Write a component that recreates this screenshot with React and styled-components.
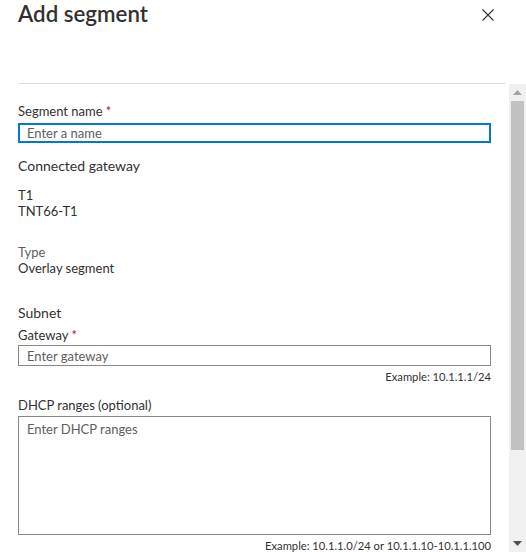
import React from "react";
import styled, { createGlobalStyle } from "styled-components";

const GlobalStyle = createGlobalStyle`
  html, body {
    margin: 0;
    padding: 0;
    background: #fff;
  }
  body {
    font-family: Lato, "Open Sans", sans-serif;
    color: #323130;
  }
`;

const Panel = styled.div`
  width: 526px;
  height: 552px;
  display: flex;
  flex-direction: column;
  overflow: hidden;
  background: #fff;
`;

const Header = styled.div`
  height: 83px;
  margin: 0 21px 0 18px;
  border-bottom: 1px solid #e1dfdd;
  display: flex;
  justify-content: space-between;
  align-items: flex-start;
`;

const Title = styled.h2`
  margin: 0;
  font-size: 22.3px;
  font-weight: 600;
  line-height: 28px;
  color: #323130;
`;

const CloseButton = styled.button`
  border: none;
  background: transparent;
  padding: 0;
  margin: 9px 11px 0 0;
  width: 12px;
  height: 12px;
  display: flex;
  cursor: pointer;
`;

const Body = styled.div`
  flex: 1;
  display: flex;
  min-height: 0;
`;

const Content = styled.div`
  flex: 1;
  padding: 19px 18px 0 18px;
  display: flex;
  flex-direction: column;
  font-size: 13px;
  line-height: 16px;
`;

const Label = styled.div`
  font-size: 13px;
  line-height: 16px;
  color: ${(p) => (p.$muted ? "#605e5c" : "#323130")};
  margin-bottom: ${(p) => p.$gap || 0}px;
`;

const Required = styled.span`
  color: #a4262c;
  margin-left: 3px;
`;

const SectionTitle = styled.div`
  font-size: 14px;
  line-height: 18px;
  color: #323130;
  margin-top: ${(p) => p.$top || 0}px;
`;

const Text = styled.div`
  font-size: 13px;
  line-height: 16px;
  color: #323130;
`;

const Group = styled.div`
  display: flex;
  flex-direction: column;
  margin-top: ${(p) => p.$top || 0}px;
`;

const TextInput = styled.input`
  box-sizing: border-box;
  width: 100%;
  height: 21px;
  margin: 0;
  padding: 0 8px;
  font-family: inherit;
  font-size: 13px;
  color: #323130;
  background: #fff;
  border: ${(p) => (p.$focused ? "2px solid #0078d4" : "1px solid #8a8886")};
  padding-left: ${(p) => (p.$focused ? 7 : 8)}px;
  outline: none;
  border-radius: 0;

  &::placeholder {
    color: #605e5c;
  }
`;

const TextArea = styled.textarea`
  box-sizing: border-box;
  width: 100%;
  height: 119px;
  margin: 0;
  padding: 4px 8px;
  font-family: inherit;
  font-size: 13px;
  line-height: 16px;
  color: #323130;
  border: 1px solid #8a8886;
  border-radius: 0;
  resize: none;
  outline: none;
  display: block;

  &::placeholder {
    color: #605e5c;
  }
`;

const Hint = styled.div`
  text-align: right;
  font-size: 11.2px;
  line-height: 14px;
  color: #323130;
  margin-top: 4px;
`;

const ScrollTrack = styled.div`
  width: 17px;
  background: #f0f0f0;
  display: flex;
  flex-direction: column;
  align-items: center;
`;

const ScrollArrow = styled.div`
  height: 17px;
  width: 17px;
  display: flex;
  align-items: center;
  justify-content: center;
`;

const ScrollThumb = styled.div`
  width: 13px;
  height: 349px;
  background: #c1c1c1;
`;

const Spacer = styled.div`
  flex: 1;
`;

const Arrow = ({ down }) => (
  <svg width="9" height="5" viewBox="0 0 9 5">
    <path
      d={down ? "M0 0 L9 0 L4.5 5 Z" : "M0 5 L9 5 L4.5 0 Z"}
      fill={down ? "#505050" : "#a3a3a3"}
    />
  </svg>
);

export default function App() {
  return (
    <>
      <GlobalStyle />
      <Panel>
        <Header>
          <Title>Add segment</Title>
          <CloseButton aria-label="Close">
            <svg width="12" height="12" viewBox="0 0 12 12">
              <path d="M0.5 0.5 L11.5 11.5 M11.5 0.5 L0.5 11.5" stroke="#323130" strokeWidth="1.1" />
            </svg>
          </CloseButton>
        </Header>
        <Body>
          <Content>
            <Label $gap={4}>
              Segment name<Required>*</Required>
            </Label>
            <TextInput $focused placeholder="Enter a name" />

            <SectionTitle $top={14}>Connected gateway</SectionTitle>
            <Group $top={12}>
              <Text>T1</Text>
              <Text>TNT66-T1</Text>
            </Group>

            <Group $top={25}>
              <Label $muted>Type</Label>
              <Text>Overlay segment</Text>
            </Group>

            <SectionTitle $top={28}>Subnet</SectionTitle>
            <Group $top={5}>
              <Label $gap={2}>
                Gateway<Required>*</Required>
              </Label>
              <TextInput placeholder="Enter gateway" />
              <Hint>Example: 10.1.1.1/24</Hint>
            </Group>

            <Group $top={13}>
              <Label $gap={3}>DHCP ranges (optional)</Label>
              <TextArea placeholder="Enter DHCP ranges" />
              <Hint>Example: 10.1.1.0/24 or 10.1.1.10-10.1.1.100</Hint>
            </Group>
          </Content>
          <ScrollTrack>
            <ScrollArrow>
              <Arrow />
            </ScrollArrow>
            <ScrollThumb />
            <Spacer />
            <ScrollArrow>
              <Arrow down />
            </ScrollArrow>
          </ScrollTrack>
        </Body>
      </Panel>
    </>
  );
}
